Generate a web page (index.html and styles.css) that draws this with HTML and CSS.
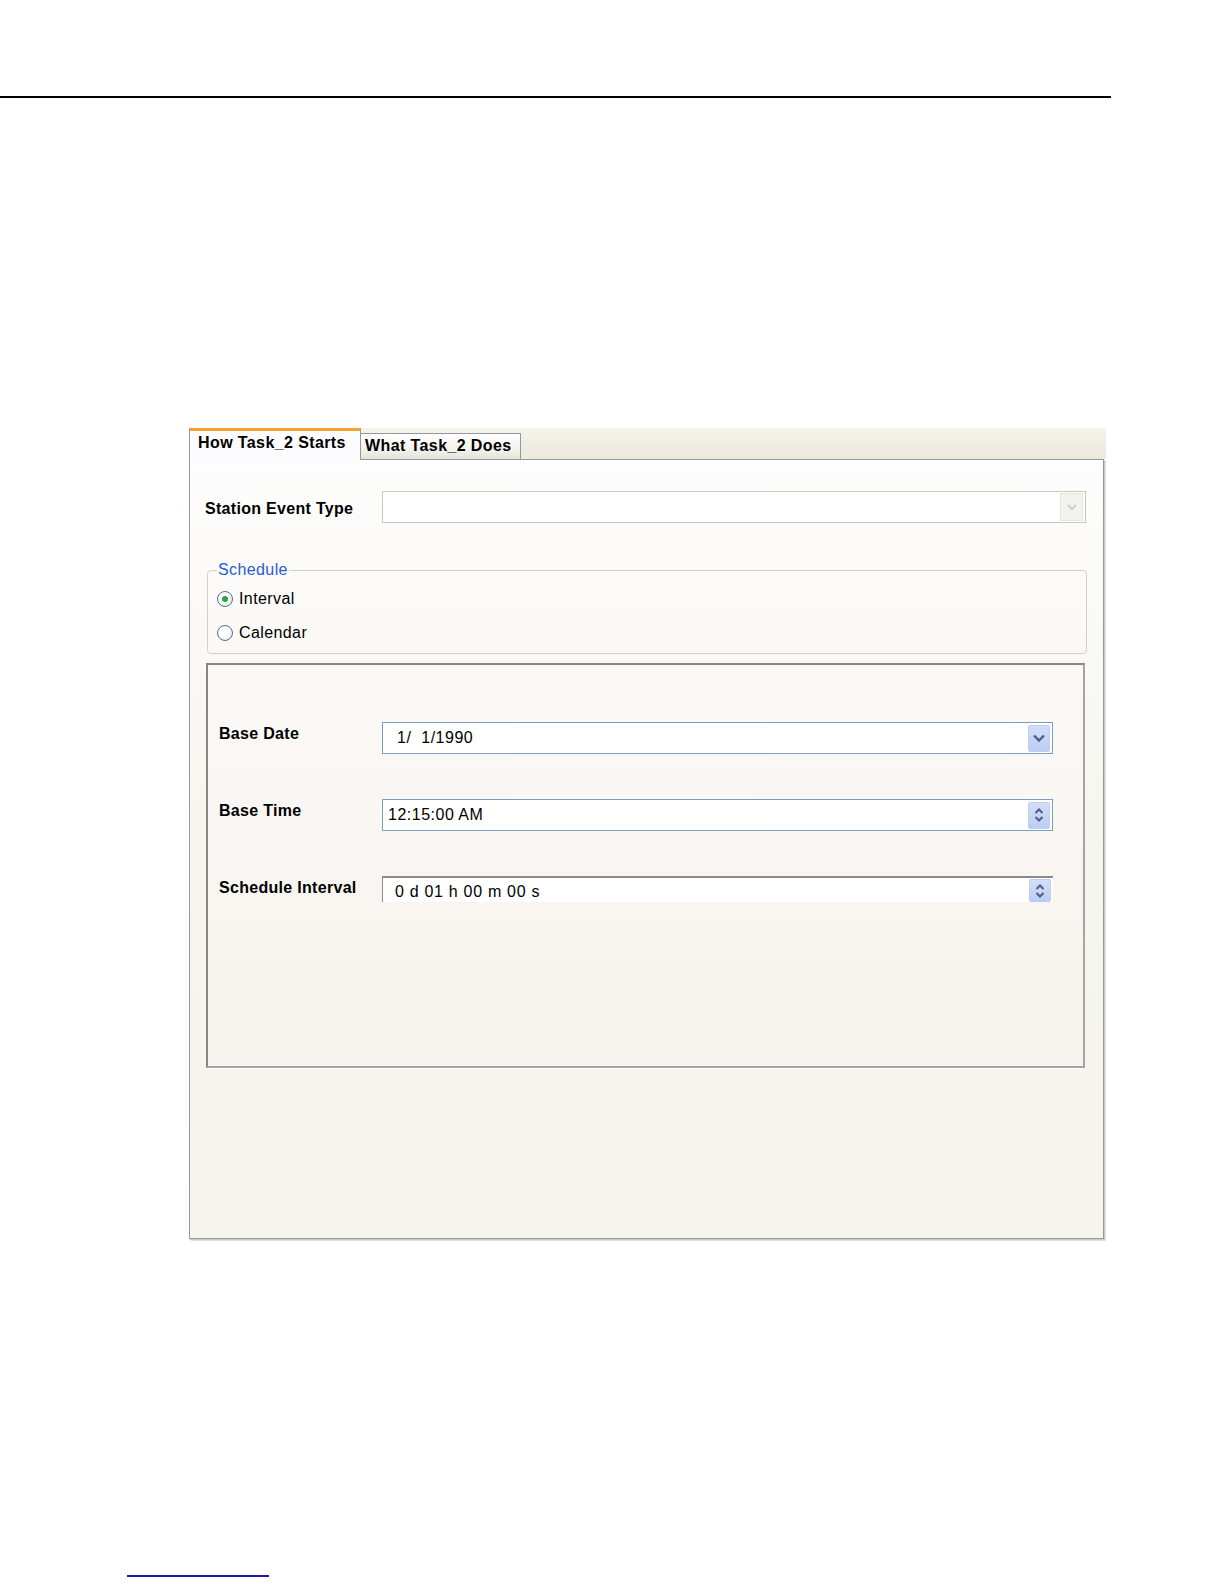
FILE: index.html
```html
<!DOCTYPE html>
<html lang="en">
<head>
  <meta charset="UTF-8">
  <title>How Task_2 Starts</title>
  <link rel="stylesheet" href="styles.css">
</head>
<body>
  <div class="page">
    <div class="rule"></div>

    <div class="dialog">
      <div class="tabs">
        <div class="tab active">How Task_2 Starts</div>
        <div class="tab">What Task_2 Does</div>
      </div>

      <div class="tab-body">
        <!-- Station event -->
        <div class="station-row">
          <label class="label">Station Event Type</label>
          <div class="combo disabled">
            <span class="combo-btn">
              <svg width="12" height="8" viewBox="0 0 12 8"><path d="M2 2 L6 6 L10 2" fill="none" stroke="#c6c4b8" stroke-width="1.6"/></svg>
            </span>
          </div>
        </div>

        <fieldset class="schedule">
          <legend>Schedule</legend>
          <div class="radio-row"><span class="radio checked"></span>Interval</div>
          <div class="radio-row"><span class="radio"></span>Calendar</div>
        </fieldset>

        <!-- Interval settings -->
        <div class="inner-panel">
          <div class="field-row">
            <label class="label">Base Date</label>
            <div class="field date">
              <span class="value">1/  1/1990</span>
              <span class="spin-btn">
                <svg width="14" height="10" viewBox="0 0 14 10"><path d="M2 2.5 L7 7.5 L12 2.5" fill="none" stroke="#4b5f86" stroke-width="2.4"/></svg>
              </span>
            </div>
          </div>

          <div class="field-row">
            <label class="label">Base Time</label>
            <div class="field">
              <span class="value">12:15:00 AM</span>
              <span class="spin-btn stacked">
                <svg width="12" height="18" viewBox="0 0 12 18"><path d="M2.5 7 L6 3.5 L9.5 7 M2.5 11 L6 14.5 L9.5 11" fill="none" stroke="#4b5f86" stroke-width="2"/></svg>
              </span>
            </div>
          </div>

          <div class="field-row">
            <label class="label">Schedule Interval</label>
            <div class="field sunken">
              <span class="value">0 d 01 h 00 m 00 s</span>
              <span class="spin-btn stacked">
                <svg width="12" height="18" viewBox="0 0 12 18"><path d="M2.5 7 L6 3.5 L9.5 7 M2.5 11 L6 14.5 L9.5 11" fill="none" stroke="#4b5f86" stroke-width="2"/></svg>
              </span>
            </div>
          </div>
        </div>
      </div>
    </div>

    <div class="foot-rule"></div>
  </div>
</body>
</html>
```

FILE: styles.css
```css
/* General */
body {
  margin: 0;
  background: #fff;
  font-family: 'Liberation Sans', Arial, sans-serif;
  color: #000;
}

.page {
  padding-top: 96px;
}

.rule {
  width: 1111px;
  height: 2px;
  background: #000;
}

.foot-rule {
  width: 142px;
  height: 2px;
  margin: 336px 0 0 127px;
  background: #1c1c9c;
}

/* Dialog */
.dialog {
  width: 917px;
  margin: 330px 0 0 189px;
}

.tabs {
  display: flex;
  align-items: flex-end;
  height: 31px;
  background: linear-gradient(#f4f3ec, #ece9dc);
}

.tab {
  box-sizing: border-box;
  width: 160px;
  height: 26px;
  padding: 3px 0 0 4px;
  font-size: 16px;
  font-weight: bold;
  letter-spacing: 0.4px;
  background: linear-gradient(#ffffff, #f0efe8 70%, #e4e2d8);
  border: 1px solid #919b9c;
  border-bottom: none;
  border-left: none;
}

.tab.active {
  position: relative;
  width: 172px;
  height: 32px;
  margin-bottom: -1px;
  padding: 3px 0 0 8px;
  background: #fcfcfe;
  border-left: 1px solid #919b9c;
  border-top: 3px solid #f2a230;
}

.tab-body {
  box-sizing: border-box;
  width: 915px;
  height: 780px;
  padding: 31px 0 0 15px;
  border: 1px solid #919b9c;
  background: linear-gradient(#fdfdfd, #f7f5ef 45%, #f7f4ee);
  box-shadow: 1px 1px 0 #cfcdc2, 2px 2px 0 #e2e0d6;
}

.label {
  font-size: 16px;
  font-weight: bold;
  letter-spacing: 0.3px;
}

/* Station row */
.station-row {
  display: flex;
  align-items: center;
  height: 32px;
}

.station-row .label {
  width: 177px;
  padding-top: 3px;
}

.combo {
  box-sizing: border-box;
  display: flex;
  justify-content: flex-end;
  align-items: center;
  width: 704px;
  height: 32px;
  padding-right: 2px;
  background: #fff;
  border: 1px solid #cbc9bd;
}

.combo-btn {
  display: flex;
  align-items: center;
  justify-content: center;
  width: 21px;
  height: 26px;
  background: #f3f2ec;
  border: 1px solid #e6e4dc;
}

/* Schedule group */
.schedule {
  width: 880px;
  margin: 38px 0 0 2px;
  padding: 3px 0 3px 9px;
  box-sizing: border-box;
  border: 1px solid #d3d1c3;
  border-radius: 4px;
}

.schedule legend {
  padding: 0 1px;
  font-size: 16px;
  letter-spacing: 0.4px;
  line-height: 18px;
  color: #2c5ad2;
}

.radio-row {
  display: flex;
  align-items: center;
  height: 34px;
  font-size: 16px;
  letter-spacing: 0.4px;
}

.radio {
  box-sizing: border-box;
  display: flex;
  align-items: center;
  justify-content: center;
  width: 16px;
  height: 16px;
  margin: 0 6px 0 0;
  border: 1px solid #4f7196;
  border-radius: 50%;
  background: radial-gradient(circle at 40% 40%, #fff 40%, #dcdcd4);
}

.radio.checked::after {
  content: "";
  width: 6px;
  height: 6px;
  border-radius: 50%;
  background: #2fa23a;
}

/* Inner panel */
.inner-panel {
  box-sizing: border-box;
  width: 879px;
  height: 405px;
  margin: 9px 0 0 1px;
  padding: 57px 0 0 11px;
  border: 2px solid;
  border-color: #868686 #a4a4a4 #a4a4a4 #868686;
  background: linear-gradient(#fbf9f6, #f6f3ee);
  box-shadow: 0 1px 0 #fff;
}

.field-row {
  display: flex;
  align-items: flex-start;
  margin-bottom: 45px;
}

.field-row .label {
  width: 163px;
  padding-top: 3px;
}

.field {
  box-sizing: border-box;
  display: flex;
  align-items: center;
  justify-content: space-between;
  width: 671px;
  height: 32px;
  padding: 0 2px 0 5px;
  background: #fff;
  border: 1px solid #7f9db9;
  font-size: 16px;
  letter-spacing: 0.5px;
}

.field.date {
  padding-left: 14px;
}

.field .value {
  white-space: pre;
}

.field.sunken {
  height: 26px;
  padding-left: 12px;
  border: none;
  border-top: 2px solid #8a8a8a;
  border-left: 1px solid #8a8a8a;
  align-items: flex-end;
  letter-spacing: 0.7px;
}

.field.sunken .value {
  padding-bottom: 1px;
}

.spin-btn {
  display: flex;
  align-items: center;
  justify-content: center;
  width: 22px;
  height: 27px;
  box-sizing: border-box;
  border: 1px solid #bccdf6;
  border-radius: 2px;
  background: linear-gradient(#d3def9, #bcccf3);
}

.field.sunken .spin-btn {
  height: 23px;
}
```
